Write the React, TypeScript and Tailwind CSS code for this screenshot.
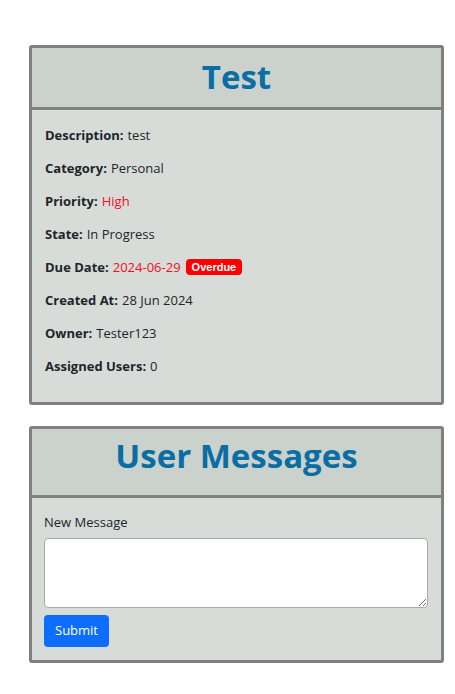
const details = [
  { label: "Description", value: "test" },
  { label: "Category", value: "Personal" },
  { label: "Priority", value: "High", red: true },
  { label: "State", value: "In Progress" },
  { label: "Due Date", value: "2024-06-29", red: true, badge: "Overdue" },
  { label: "Created At", value: "28 Jun 2024" },
  { label: "Owner", value: "Tester123" },
  { label: "Assigned Users", value: "0" },
];

function Card({
  title,
  headerClass,
  children,
}: {
  title: string;
  headerClass: string;
  children: React.ReactNode;
}) {
  return (
    <div className="ml-[29px] w-[415px] overflow-hidden rounded-[3px] border-[3px] border-[#808080] bg-[#d7dcd9]">
      <div
        className={`border-b-[3px] border-[#808080] bg-[#cbd2cb] text-center ${headerClass}`}
      >
        <h1 className="text-[33px] font-bold leading-[40px] text-[#0a6ea5]">
          {title}
        </h1>
      </div>
      {children}
    </div>
  );
}

export default function App() {
  return (
    <div
      className="min-h-screen bg-white pt-[45px] text-[13px] text-[#212529]"
      style={{ fontFamily: '"Open Sans", sans-serif' }}
    >
      <Card title="Test" headerClass="pt-[9px] pb-[10px]">
        <div className="px-[13px] pt-[15px] pb-[13px]">
          {details.map((d) => (
            <p key={d.label} className="mb-[13px] flex h-[20px] items-center leading-[20px]">
              <span className="font-bold">{d.label}:</span>
              <span className={`ml-[4px] ${d.red ? "text-[#f20d1f]" : ""}`}>
                {d.value}
              </span>
              {d.badge && (
                <span
                  className="ml-[5px] rounded-[4px] bg-[#ff0000] px-[6px] text-[11px] font-bold leading-[16px] text-white"
                  style={{ fontFamily: '"Liberation Sans", Arial, sans-serif' }}
                >
                  {d.badge}
                </span>
              )}
            </p>
          ))}
        </div>
      </Card>

      <div className="h-[21px]" />

      <Card title="User Messages" headerClass="pt-[7px] pb-[19px]">
        <div className="pl-[12px] pr-[13px] pt-[14px] pb-[13px]">
          <label className="block leading-[20px]">New Message</label>
          <textarea className="mt-[6px] block h-[70px] w-full rounded-[4px] border border-[#a9a9a9] bg-white" />
          <button className="mt-[7px] h-[32px] rounded-[4px] bg-[#0d6efd] px-[11px] text-[13px] text-white">
            Submit
          </button>
        </div>
      </Card>
    </div>
  );
}
